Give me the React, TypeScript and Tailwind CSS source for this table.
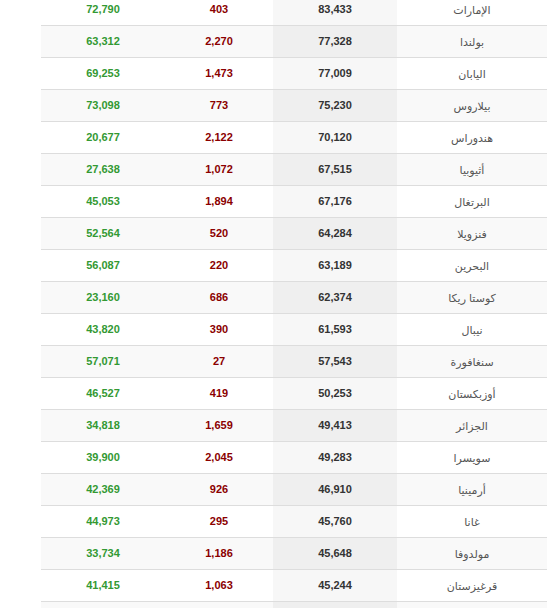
const rows: [string, string, string, string][] = [
  ["الإمارات", "83,433", "403", "72,790"],
  ["بولندا", "77,328", "2,270", "63,312"],
  ["اليابان", "77,009", "1,473", "69,253"],
  ["بيلاروس", "75,230", "773", "73,098"],
  ["هندوراس", "70,120", "2,122", "20,677"],
  ["أثيوبيا", "67,515", "1,072", "27,638"],
  ["البرتغال", "67,176", "1,894", "45,053"],
  ["فنزويلا", "64,284", "520", "52,564"],
  ["البحرين", "63,189", "220", "56,087"],
  ["كوستا ريكا", "62,374", "686", "23,160"],
  ["نيبال", "61,593", "390", "43,820"],
  ["سنغافورة", "57,543", "27", "57,071"],
  ["أوزبكستان", "50,253", "419", "46,527"],
  ["الجزائر", "49,413", "1,659", "34,818"],
  ["سويسرا", "49,283", "2,045", "39,900"],
  ["أرمينيا", "46,910", "926", "42,369"],
  ["غانا", "45,760", "295", "44,973"],
  ["مولدوفا", "45,648", "1,186", "33,734"],
  ["قرغيزستان", "45,244", "1,063", "41,415"],
  ["", "", "", ""],
];

export default function App() {
  return (
    <div className="h-[608px] overflow-hidden bg-white">
      <div className="-mt-[7px] ml-[41px] w-[506px]">
        <table
          dir="rtl"
          className="w-full table-fixed border-collapse text-center font-['Liberation_Sans','DejaVu_Sans',sans-serif]"
        >
          <colgroup>
            <col className="w-[150px]" />
            <col className="w-[124px]" />
            <col className="w-[108px]" />
            <col className="w-[124px]" />
          </colgroup>
          <tbody>
            {rows.map(([country, total, deaths, recovered], i) => {
              const striped = i % 2 === 1;
              return (
                <tr
                  key={i}
                  className={`h-[32px] border-t border-[#dddddd] ${striped ? "bg-[#f9f9f9]" : "bg-white"}`}
                >
                  <td className="p-0 pt-px text-[11px] text-[#555555]">{country}</td>
                  <td
                    className={`p-0 text-[11px] font-bold text-[#333333] ${striped ? "bg-[#efefef]" : "bg-[#f7f7f7]"}`}
                  >
                    {total}
                  </td>
                  <td className="p-0 text-[11px] font-bold text-[#8b0000]">{deaths}</td>
                  <td className="p-0 text-[11px] font-bold text-[#339933]">{recovered}</td>
                </tr>
              );
            })}
          </tbody>
        </table>
      </div>
    </div>
  );
}
